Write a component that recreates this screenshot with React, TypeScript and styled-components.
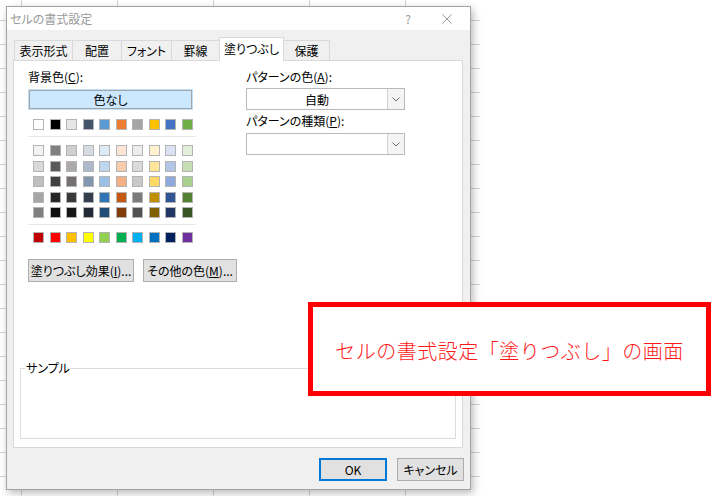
import styled, { createGlobalStyle } from "styled-components";

const GlobalStyle = createGlobalStyle`
  html, body {
    margin: 0;
    padding: 0;
    background: #ffffff;
  }
  body {
    font-family: "Noto Sans CJK JP", "Noto Sans", sans-serif;
    font-size: 12px;
    color: #000;
  }
`;

const uiFont = `"Noto Sans CJK JP", "Noto Sans", sans-serif`;

const Page = styled.div`
  position: relative;
  display: flex;
  width: 728px;
  height: 496px;
  overflow: hidden;
  background: #ffffff;
`;

const Sheet = styled.div`
  width: 480px;
  height: 100%;
  box-sizing: border-box;
  padding: 6px 0 0 6px;
  background-color: #ffffff;
  background-image: linear-gradient(to right, #d6d6d6 1px, transparent 1px),
    linear-gradient(to bottom, #d6d6d6 1px, transparent 1px);
  background-size: 96px 24px;
  background-position: 21px 20px;
`;

const Dialog = styled.div`
  width: 465px;
  height: 484px;
  box-sizing: border-box;
  border: 1px solid #a3a3a3;
  background: #f0f0f0;
  box-shadow: 2px 3px 8px rgba(0, 0, 0, 0.28);
  display: flex;
  flex-direction: column;
  font-family: ${uiFont};
  font-feature-settings: "palt";
`;

const TitleBar = styled.div`
  height: 23px;
  background: #ffffff;
  display: flex;
  align-items: center;
  padding-left: 3px;
  color: #9a9a9a;
  font-size: 12px;
`;

const Title = styled.div`
  flex: 1;
`;

const TitleButton = styled.div<{ $w: number }>`
  width: ${(p) => p.$w}px;
  height: 23px;
  display: flex;
  align-items: center;
  justify-content: center;
  color: #9a9a9a;
  font-size: 12px;
`;

const Body = styled.div`
  flex: 1;
  display: flex;
  flex-direction: column;
  padding: 7px 7px 0 6px;
`;

const TabStrip = styled.div`
  display: flex;
  align-items: flex-end;
  height: 24px;
  margin-bottom: -1px;
  padding-left: 1px;
  position: relative;
  z-index: 1;
`;

const Tab = styled.div<{ $w: number; $active?: boolean }>`
  width: ${(p) => p.$w}px;
  height: ${(p) => (p.$active ? 24 : 21)}px;
  box-sizing: border-box;
  margin-left: -1px;
  border: 1px solid #d9d9d9;
  border-bottom: ${(p) => (p.$active ? "none" : "1px solid #d9d9d9")};
  background: ${(p) => (p.$active ? "#ffffff" : "#f0f0f0")};
  display: flex;
  align-items: center;
  justify-content: center;
  font-size: 12px;
  padding-bottom: ${(p) => (p.$active ? 2 : 0)}px;
  &:first-child {
    margin-left: 0;
  }
`;

const Panel = styled.div`
  flex: 1;
  background: #ffffff;
  border: 1px solid #d9d9d9;
  padding: 9px 6px 8px 6px;
  display: flex;
  flex-direction: column;
`;

const FillArea = styled.div`
  display: flex;
  gap: 50px;
  padding-left: 8px;
`;

const LeftColumn = styled.div`
  width: 168px;
  display: flex;
  flex-direction: column;
`;

const RightColumn = styled.div`
  width: 159px;
  display: flex;
  flex-direction: column;
`;

const Label = styled.div<{ $mt?: number }>`
  height: 14px;
  line-height: 14px;
  font-size: 12px;
  margin-top: ${(p) => p.$mt ?? 0}px;
  white-space: nowrap;
  u {
    text-underline-offset: 1px;
  }
`;

const NoColorButton = styled.div`
  margin: 6px 0 0 1px;
  width: 163px;
  height: 19px;
  box-sizing: border-box;
  background: #cce8ff;
  border: 1px solid #a4a4a4;
  box-shadow: 0 0 0 1px #bfe0fb;
  display: flex;
  align-items: center;
  justify-content: center;
  font-size: 12px;
`;

const SwatchRow = styled.div<{ $mt?: number }>`
  display: grid;
  grid-template-columns: repeat(10, 16.5px);
  row-gap: 4.5px;
  padding-left: 5px;
  margin-top: ${(p) => p.$mt ?? 0}px;
`;

const Swatch = styled.div<{ $c: string }>`
  width: 11px;
  height: 11px;
  box-sizing: border-box;
  background: ${(p) => p.$c};
  border: 1px solid #b4b4b4;
`;

const Separator = styled.div<{ $mt: number; $mb: number }>`
  height: 1px;
  background: #e6e6e6;
  margin-top: ${(p) => p.$mt}px;
  margin-bottom: ${(p) => p.$mb}px;
`;

const ButtonRow = styled.div`
  display: flex;
  gap: 9px;
  margin-top: 16px;
`;

const PushButton = styled.div<{ $w: number; $default?: boolean }>`
  flex-shrink: 0;
  width: ${(p) => p.$w}px;
  height: 23px;
  box-sizing: border-box;
  background: #e1e1e1;
  border: 1px solid ${(p) => (p.$default ? "#0078d7" : "#adadad")};
  box-shadow: ${(p) => (p.$default ? "inset 0 0 0 1px #0078d7" : "none")};
  display: flex;
  align-items: center;
  justify-content: center;
  font-size: 12px;
  white-space: nowrap;
`;

const Select = styled.div<{ $mt: number }>`
  margin-top: ${(p) => p.$mt}px;
  height: 22px;
  box-sizing: border-box;
  border: 1px solid #b9b9b9;
  background: #ffffff;
  display: flex;
`;

const SelectValue = styled.div`
  flex: 1;
  display: flex;
  align-items: center;
  justify-content: center;
  font-size: 12px;
`;

const SelectArrow = styled.div`
  width: 16px;
  border-left: 1px solid #d2d2d2;
  background: #f4f4f4;
  display: flex;
  align-items: center;
  justify-content: center;
`;

const SampleGroup = styled.fieldset`
  margin: auto 0 0 0;
  padding: 0;
  height: 78px;
  box-sizing: border-box;
  border: 1px solid #dcdcdc;
`;

const SampleLegend = styled.legend`
  margin-left: 4px;
  padding: 0 1px;
  font-size: 12px;
  line-height: 14px;
`;

const Footer = styled.div`
  height: 41px;
  box-sizing: border-box;
  padding-top: 10px;
  margin-right: -1px;
  display: flex;
  justify-content: flex-end;
  gap: 10px;
`;

const Callout = styled.div`
  position: absolute;
  left: 308px;
  top: 302px;
  width: 403px;
  height: 94px;
  box-sizing: border-box;
  border: 5px solid #ff0000;
  background: #ffffff;
  display: flex;
  align-items: center;
  justify-content: center;
  padding-top: 2px;
  color: #ff1a1a;
  font-family: ${uiFont};
  font-size: 20px;
  font-weight: 300;
  letter-spacing: 0.5px;
`;

const themeColors = [
  "#ffffff", "#000000", "#e7e6e6", "#44546a", "#5b9bd5",
  "#ed7d31", "#a5a5a5", "#ffc000", "#4472c4", "#70ad47",
];

const tintColumns = [
  ["#f2f2f2", "#d9d9d9", "#bfbfbf", "#a6a6a6", "#808080"],
  ["#808080", "#595959", "#404040", "#262626", "#0d0d0d"],
  ["#d0cece", "#aeaaaa", "#757171", "#3a3838", "#171616"],
  ["#d6dce4", "#adb9ca", "#8497b0", "#333f4f", "#222b35"],
  ["#ddebf7", "#bdd7ee", "#9bc2e6", "#2f75b5", "#1f4e78"],
  ["#fce4d6", "#f8cbad", "#f4b084", "#c65911", "#833c0c"],
  ["#ededed", "#dbdbdb", "#c9c9c9", "#7b7b7b", "#525252"],
  ["#fff2cc", "#ffe699", "#ffd966", "#bf8f00", "#806000"],
  ["#d9e1f2", "#b4c6e7", "#8ea9db", "#305496", "#203764"],
  ["#e2efda", "#c6e0b4", "#a9d08e", "#548235", "#375623"],
];

const tintRows = [0, 1, 2, 3, 4].flatMap((r) => tintColumns.map((col) => col[r]));

const standardColors = [
  "#c00000", "#ff0000", "#ffc000", "#ffff00", "#92d050",
  "#00b050", "#00b0f0", "#0070c0", "#002060", "#7030a0",
];

const tabs = [
  { label: "表示形式", w: 59 },
  { label: "配置", w: 50 },
  { label: "フォント", w: 51 },
  { label: "罫線", w: 49 },
  { label: "塗りつぶし", w: 65, active: true },
  { label: "保護", w: 47 },
];

function Chevron() {
  return (
    <svg width="8" height="5" viewBox="0 0 8 5">
      <path d="M0.5 0.5 L4 4 L7.5 0.5" fill="none" stroke="#6d6d6d" strokeWidth="1" />
    </svg>
  );
}

function CloseIcon() {
  return (
    <svg width="10" height="10" viewBox="0 0 10 10">
      <path d="M0.5 0.5 L9.5 9.5 M9.5 0.5 L0.5 9.5" stroke="#999999" strokeWidth="1" />
    </svg>
  );
}

export default function App() {
  return (
    <Page>
      <GlobalStyle />
      <Sheet>
        <Dialog>
          <TitleBar>
            <Title>セルの書式設定</Title>
            <TitleButton $w={30}>?</TitleButton>
            <TitleButton $w={47}>
              <CloseIcon />
            </TitleButton>
          </TitleBar>
          <Body>
            <TabStrip>
              {tabs.map((t) => (
                <Tab key={t.label} $w={t.w} $active={t.active}>
                  {t.label}
                </Tab>
              ))}
            </TabStrip>
            <Panel>
              <FillArea>
                <LeftColumn>
                  <Label>
                    背景色(<u>C</u>):
                  </Label>
                  <NoColorButton>色なし</NoColorButton>
                  <SwatchRow $mt={10}>
                    {themeColors.map((c, i) => (
                      <Swatch key={i} $c={c} />
                    ))}
                  </SwatchRow>
                  <Separator $mt={6} $mb={8} />
                  <SwatchRow>
                    {tintRows.map((c, i) => (
                      <Swatch key={i} $c={c} />
                    ))}
                  </SwatchRow>
                  <Separator $mt={6} $mb={7} />
                  <SwatchRow>
                    {standardColors.map((c, i) => (
                      <Swatch key={i} $c={c} />
                    ))}
                  </SwatchRow>
                  <ButtonRow>
                    <PushButton $w={106}>
                      塗りつぶし効果(<u>I</u>)...
                    </PushButton>
                    <PushButton $w={94}>
                      その他の色(<u>M</u>)...
                    </PushButton>
                  </ButtonRow>
                </LeftColumn>
                <RightColumn>
                  <Label>
                    パターンの色(<u>A</u>):
                  </Label>
                  <Select $mt={4}>
                    <SelectValue>自動</SelectValue>
                    <SelectArrow>
                      <Chevron />
                    </SelectArrow>
                  </Select>
                  <Label $mt={4}>
                    パターンの種類(<u>P</u>):
                  </Label>
                  <Select $mt={5}>
                    <SelectValue />
                    <SelectArrow>
                      <Chevron />
                    </SelectArrow>
                  </Select>
                </RightColumn>
              </FillArea>
              <SampleGroup>
                <SampleLegend>サンプル</SampleLegend>
              </SampleGroup>
            </Panel>
            <Footer>
              <PushButton $w={68} $default>
                OK
              </PushButton>
              <PushButton $w={67}>キャンセル</PushButton>
            </Footer>
          </Body>
        </Dialog>
      </Sheet>
      <Callout>セルの書式設定「塗りつぶし」の画面</Callout>
    </Page>
  );
}
